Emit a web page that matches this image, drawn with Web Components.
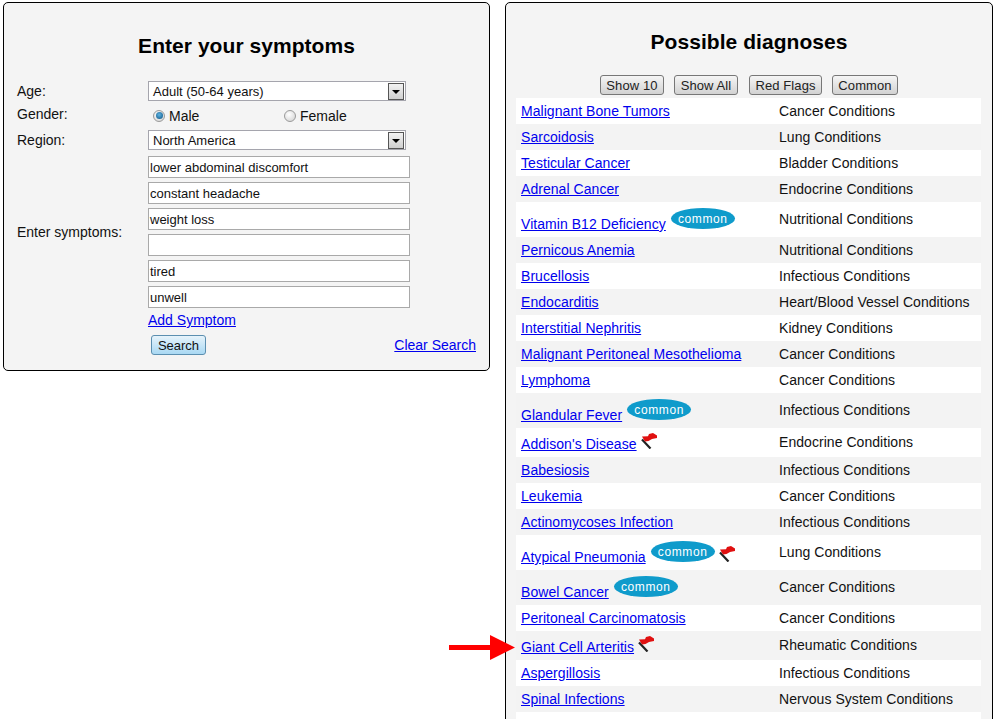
<!DOCTYPE html>
<html>
<head>
<meta charset="utf-8">
<title>Symptom checker</title>
<style>
  html, body { margin: 0; overflow: hidden; background: #fff; }
  body {
    display: flex; gap: 15px; align-items: flex-start;
    padding: 2px 3px 0; height: 717px; position: relative;
    font: 14px/1 "Liberation Sans", Arial, sans-serif; color: #111;
  }
</style>
</head>
<body>
<symptom-panel>
  <form-row label="Age:"><fake-select>Adult (50-64 years)</fake-select></form-row>
  <form-row label="Gender:" class="gender">
    <radio-option checked>Male</radio-option>
    <radio-option>Female</radio-option>
  </form-row>
  <form-row label="Region:"><fake-select>North America</fake-select></form-row>
  <form-row label="Enter symptoms:" class="stack">
    <symptom-field>lower abdominal discomfort</symptom-field>
    <symptom-field>constant headache</symptom-field>
    <symptom-field>weight loss</symptom-field>
    <symptom-field></symptom-field>
    <symptom-field>tired</symptom-field>
    <symptom-field>unwell</symptom-field>
  </form-row>
</symptom-panel>
<diagnosis-panel></diagnosis-panel>
<red-arrow></red-arrow>

<script>
const linkCss = `a { color: #0000ee; text-decoration: underline; }`;

class SymptomPanel extends HTMLElement {
  constructor() {
    super();
    this.attachShadow({ mode: 'open' });
    this.shadowRoot.innerHTML = `
      <style>
        :host { display: block; width: 485px; height: 367px; background: #f4f4f4; border: 1px solid #000; border-radius: 5px; flex: none; }
        h2 { margin: 0; height: 72px; padding-top: 6px; box-sizing: content-box; display: flex; align-items: center; justify-content: center; font-size: 21px; letter-spacing: .05px; color: #000; }
        .rows { display: flex; flex-direction: column; }
        .foot { display: flex; flex-direction: column; padding-left: 144px; padding-right: 13px; }
        .add { height: 22px; margin-top: 1px; display: flex; align-items: center; }
        .actions { display: flex; justify-content: space-between; align-items: center; margin-top: 4px; height: 20px; padding-left: 3px; }
        button { width: 55px; height: 20px; padding: 0; border: 1px solid #5b8fb0; border-radius: 3px; font: 13px "Liberation Sans", Arial, sans-serif; color: #111; background: linear-gradient(#e6f3fb, #a9d8f3); }
        ${linkCss}
      </style>
      <h2>Enter your symptoms</h2>
      <div class="rows"><slot></slot></div>
      <div class="foot">
        <div class="add"><a href="#">Add Symptom</a></div>
        <div class="actions"><button>Search</button><a href="#">Clear Search</a></div>
      </div>`;
  }
}

class FormRow extends HTMLElement {
  constructor() {
    super();
    this.attachShadow({ mode: 'open' });
    this.shadowRoot.innerHTML = `
      <style>
        :host { display: grid; grid-template-columns: 131px 1fr; padding-left: 13px; align-items: center; }
        :host(.gender) { height: 29px; }
        :host(.gender) .field { display: grid; grid-template-columns: 131px 1fr; padding: 0 0 0 5px; }
        :host(.gender) .label { padding-bottom: 3px; }
        :host(.stack) { margin-top: 6px; }
        :host(.stack) .field { display: flex; flex-direction: column; gap: 4px; }
      </style>
      <div class="label"></div>
      <div class="field"><slot></slot></div>`;
    this.shadowRoot.querySelector('.label').textContent = this.getAttribute('label');
  }
}

class FakeSelect extends HTMLElement {
  constructor() {
    super();
    this.attachShadow({ mode: 'open' });
    this.shadowRoot.innerHTML = `
      <style>
        :host { display: flex; width: 258px; height: 20px; box-sizing: border-box; border: 1px solid #a5a5ad; background: #fff; align-items: center; justify-content: space-between; font-size: 13px; }
        .text { padding-left: 4px; }
        .btn { width: 16px; height: 17px; margin-right: 1px; align-self: flex-end; box-sizing: border-box; border: 1px solid #555; background: linear-gradient(#f2f2f2, #cfcfcf); display: flex; align-items: center; justify-content: center; }
        .btn::after { content: ""; border: 4px solid transparent; border-top: 4px solid #000; border-bottom: 0; }
      </style>
      <span class="text"><slot></slot></span><span class="btn"></span>`;
  }
}

class RadioOption extends HTMLElement {
  constructor() {
    super();
    this.attachShadow({ mode: 'open' });
    this.shadowRoot.innerHTML = `
      <style>
        :host { display: flex; align-items: center; gap: 4px; }
        .dot { width: 12px; height: 12px; box-sizing: border-box; border-radius: 50%; border: 1px solid #9a9a9a; background: radial-gradient(circle at 40% 35%, #fff, #cfcfcf); display: flex; align-items: center; justify-content: center; }
        :host([checked]) .dot::after { content: ""; width: 7px; height: 7px; border-radius: 50%; background: radial-gradient(circle at 45% 40%, #5fb4e2, #0a4f80); }
      </style>
      <span class="dot"></span><span><slot></slot></span>`;
  }
}

class SymptomField extends HTMLElement {
  constructor() {
    super();
    this.attachShadow({ mode: 'open' });
    this.shadowRoot.innerHTML = `
      <style>
        :host { display: flex; align-items: center; width: 262px; height: 22px; box-sizing: border-box; border: 1px solid #a9a9a9; background: #fff; padding-left: 1px; font-size: 13px; }
      </style>
      <slot></slot>`;
  }
}

class CommonBadge extends HTMLElement {
  constructor() {
    super();
    this.attachShadow({ mode: 'open' });
    this.shadowRoot.innerHTML = `
      <style>
        :host { display: flex; width: 64px; height: 21px; border-radius: 50%; background: #0f9bcb; color: #fff; font-size: 12px; letter-spacing: .6px; align-items: center; justify-content: center; flex: none; }
      </style>
      common`;
  }
}

class RedFlag extends HTMLElement {
  constructor() {
    super();
    this.attachShadow({ mode: 'open' });
    this.shadowRoot.innerHTML = `
      <style>:host { display: block; width: 16px; height: 16px; flex: none; } svg { display: block; }</style>
      <svg width="16" height="16" viewBox="0 0 16 16">
        <path d="M1 6.5 L9.5 15.5" stroke="#222" stroke-width="2.2" fill="none"/>
        <path d="M1 3.5 L7 3.2 L8 1 L12 0 L16 2.5 L16 5 L11 6 L7.5 8 L4 8.5 Z" fill="#e01010"/>
      </svg>`;
  }
}

class DiagnosisRow extends HTMLElement {
  constructor() {
    super();
    this.attachShadow({ mode: 'open' });
    this.shadowRoot.innerHTML = `
      <style>
        :host { display: grid; grid-template-columns: 263px 1fr; align-items: center; min-height: 26px; background: #fff; letter-spacing: .05px; }
        :host(:nth-child(even)) { background: #f3f3f3; }
        :host([common]) .cat, :host([flag]) .cat { padding-bottom: 2px; }
        .name { display: flex; align-items: flex-start; padding-left: 5px; }
        a { line-height: 26px; margin-top: auto; white-space: nowrap; }
        common-badge { margin: 6px 0 8px 5px; }
        red-flag { margin: 5px 0 8px 4px; }
        common-badge + red-flag { margin-top: 11px; }
        ${linkCss}
      </style>
      <div class="name"><a href="#"></a></div>
      <div class="cat"></div>`;
  }
  connectedCallback() {
    const name = this.shadowRoot.querySelector('.name');
    name.querySelector('a').textContent = this.getAttribute('name');
    this.shadowRoot.querySelector('.cat').textContent = this.getAttribute('category');
    if (this.hasAttribute('common')) name.append(document.createElement('common-badge'));
    if (this.hasAttribute('flag')) name.append(document.createElement('red-flag'));
  }
}

const diagnoses = [
  ['Malignant Bone Tumors', 'Cancer Conditions'],
  ['Sarcoidosis', 'Lung Conditions'],
  ['Testicular Cancer', 'Bladder Conditions'],
  ['Adrenal Cancer', 'Endocrine Conditions'],
  ['Vitamin B12 Deficiency', 'Nutritional Conditions', 'common'],
  ['Pernicous Anemia', 'Nutritional Conditions'],
  ['Brucellosis', 'Infectious Conditions'],
  ['Endocarditis', 'Heart/Blood Vessel Conditions'],
  ['Interstitial Nephritis', 'Kidney Conditions'],
  ['Malignant Peritoneal Mesothelioma', 'Cancer Conditions'],
  ['Lymphoma', 'Cancer Conditions'],
  ['Glandular Fever', 'Infectious Conditions', 'common'],
  ["Addison's Disease", 'Endocrine Conditions', 'flag'],
  ['Babesiosis', 'Infectious Conditions'],
  ['Leukemia', 'Cancer Conditions'],
  ['Actinomycoses Infection', 'Infectious Conditions'],
  ['Atypical Pneumonia', 'Lung Conditions', 'common flag'],
  ['Bowel Cancer', 'Cancer Conditions', 'common'],
  ['Peritoneal Carcinomatosis', 'Cancer Conditions'],
  ['Giant Cell Arteritis', 'Rheumatic Conditions', 'flag'],
  ['Aspergillosis', 'Infectious Conditions'],
  ['Spinal Infections', 'Nervous System Conditions'],
];

class DiagnosisPanel extends HTMLElement {
  constructor() {
    super();
    this.attachShadow({ mode: 'open' });
    this.shadowRoot.innerHTML = `
      <style>
        :host { display: block; width: 486px; height: 760px; background: #f4f4f4; border: 1px solid #000; border-radius: 5px; flex: none; }
        h2 { margin: 0; height: 68px; padding-top: 4px; display: flex; align-items: center; justify-content: center; font-size: 21px; letter-spacing: .05px; color: #000; }
        .tools { display: flex; justify-content: center; gap: 10px; height: 20px; margin-bottom: 3px; }
        button { height: 20px; padding: 0; border: 1px solid #777; border-radius: 3px; font: 13px "Liberation Sans", Arial, sans-serif; letter-spacing: .1px; color: #222; background: linear-gradient(#f5f5f5, #d2d2d2); }
        .list { margin: 0 11px 0 10px; }
        .list > div { height: 26px; background: #fff; }
      </style>
      <h2>Possible diagnoses</h2>
      <div class="tools">
        <button style="width:64px">Show 10</button>
        <button style="width:64px">Show All</button>
        <button style="width:73px;margin-left:1px">Red Flags</button>
        <button style="width:66px">Common</button>
      </div>
      <div class="list"></div>`;
    const list = this.shadowRoot.querySelector('.list');
    diagnoses.forEach(([name, category, marks = '']) => {
      const row = document.createElement('diagnosis-row');
      row.setAttribute('name', name);
      row.setAttribute('category', category);
      marks.split(' ').filter(Boolean).forEach(m => row.setAttribute(m, ''));
      list.append(row);
    });
    list.append(document.createElement('div'));
  }
}

class RedArrow extends HTMLElement {
  constructor() {
    super();
    this.attachShadow({ mode: 'open' });
    this.shadowRoot.innerHTML = `
      <style>:host { position: absolute; left: 449px; top: 635px; width: 67px; height: 25px; } svg { display: block; }</style>
      <svg width="67" height="25" viewBox="0 0 67 25"><path d="M0 10 H41 V0 L66 12.5 L41 25 V15 H0 Z" fill="#f00"/></svg>`;
  }
}

customElements.define('symptom-panel', SymptomPanel);
customElements.define('form-row', FormRow);
customElements.define('fake-select', FakeSelect);
customElements.define('radio-option', RadioOption);
customElements.define('symptom-field', SymptomField);
customElements.define('common-badge', CommonBadge);
customElements.define('red-flag', RedFlag);
customElements.define('diagnosis-row', DiagnosisRow);
customElements.define('diagnosis-panel', DiagnosisPanel);
customElements.define('red-arrow', RedArrow);
</script>
</body>
</html>
